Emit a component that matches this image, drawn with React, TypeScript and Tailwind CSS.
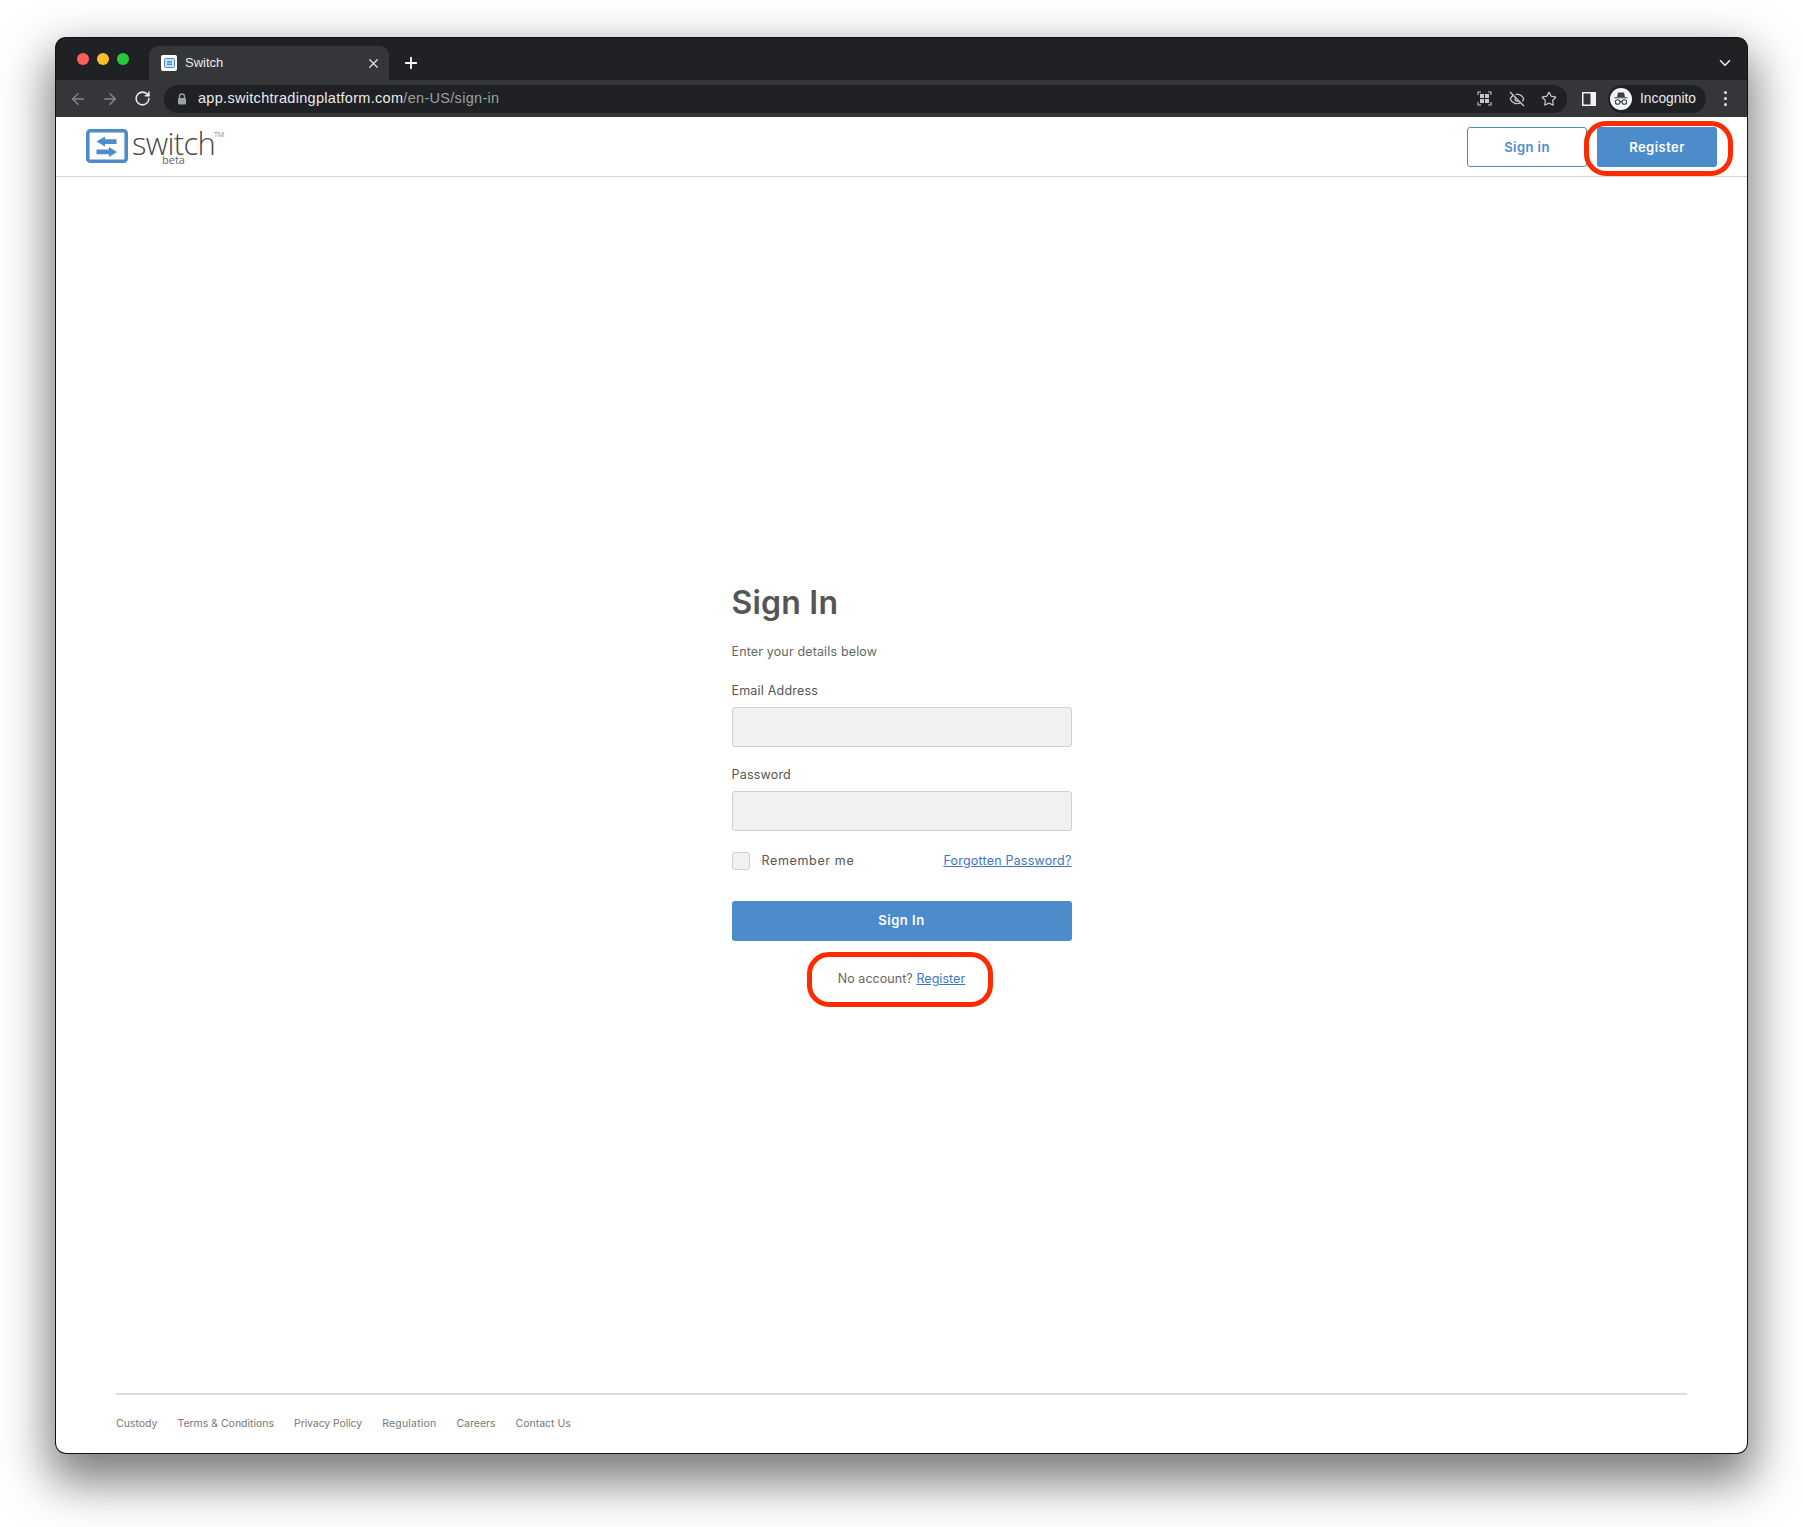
import React from "react";
import { ArrowLeft, ArrowRight, RotateCw, Star, EyeOff, X, Plus, ChevronDown } from "lucide-react";

const body = "[font-family:Inter,'Liberation_Sans',sans-serif]";
const chrome = "[font-family:'Liberation_Sans',Arial,sans-serif]";

function Logo() {
  return (
    <div className="relative ml-[30px] flex h-[59px] w-[140px] items-start self-start pt-[12px]">
      <svg width="42" height="34" viewBox="0 0 42 34" className="shrink-0">
        <rect x="1.8" y="1.8" width="38.4" height="30.4" rx="2.5" fill="#fff" stroke="#4d8ccb" strokeWidth="3.6" />
        <path d="M10.5 12.5 L19 7.5 V10.2 H30.5 V15 H19 V17.5 Z" fill="#4d8ccb" />
        <path d="M31 23 L23 28 V25.2 H10.5 V20.6 H23 V18 Z" fill="#4d8ccb" />
      </svg>
      <span className="ml-[4px] mt-[2px] text-[31px] leading-[24px] font-light tracking-[-0.7px] text-[#4a4a4a] [font-family:'Open_Sans',sans-serif]">switch</span>
      <span className="absolute left-[76px] top-[38px] text-[11px] leading-[9px] text-[#666] [font-family:'Open_Sans',sans-serif]">beta</span>
      <span className="absolute left-[128px] top-[14px] text-[7px] leading-[8px] text-[#888] [font-family:'Open_Sans',sans-serif]">TM</span>
    </div>
  );
}

function Field({ label }: { label: string }) {
  return (
    <>
      <div className="h-[20px] pt-[1px] text-[12.5px] leading-[20px] tracking-[0.2px] text-[#555]">{label}</div>
      <div className="mt-[7px] h-[40px] rounded-[3px] border border-[#cfcfcf] bg-[#f1f1f1]" />
    </>
  );
}

export default function App() {
  return (
    <div className="h-[1527px] w-[1803px] overflow-hidden bg-white pl-[55px] pt-[37px]">
      <div className="flex h-[1417px] w-[1693px] flex-col rounded-[11px] shadow-[0_22px_48px_6px_rgba(0,0,0,0.52)]">
        <div className="flex h-[43px] shrink-0 items-end rounded-t-[11px] border-x border-t border-[#111] bg-[#202124]">
          <div className="flex h-[43px] items-center gap-[8px] pl-[21px] pt-[1px]">
            <span className="h-[12px] w-[12px] rounded-full bg-[#ff5f57]" />
            <span className="h-[12px] w-[12px] rounded-full bg-[#febc2e]" />
            <span className="h-[12px] w-[12px] rounded-full bg-[#28c840]" />
          </div>
          <div className={`ml-[20px] flex h-[34px] w-[240px] items-center rounded-t-[9px] bg-[#35363a] pl-[12px] pr-[8px] ${chrome}`}>
            <span className="flex h-[16px] w-[16px] items-center justify-center rounded-[2px] bg-white">
              <svg width="11" height="10" viewBox="0 0 11 10">
                <rect x="0.5" y="0.5" width="10" height="9" rx="1" fill="#cfe0f2" stroke="#4d8ccb" />
                <rect x="3" y="3" width="5" height="1.5" fill="#4d8ccb" />
                <rect x="3" y="5.5" width="5" height="1.5" fill="#4d8ccb" />
              </svg>
            </span>
            <span className="ml-[8px] flex-1 text-[13px] text-[#e8eaed]">Switch</span>
            <X size={15} strokeWidth={2} className="text-[#dfe1e5]" />
          </div>
          <Plus size={18} strokeWidth={2.4} className="mb-[8px] ml-[13px] text-white" />
          <div className="flex-1" />
          <ChevronDown size={18} strokeWidth={2.2} className="mb-[8px] mr-[13px] text-[#e8eaed]" />
        </div>

        <div className={`flex h-[37px] shrink-0 items-center border-x border-[#111] bg-[#35363a] ${chrome}`}>
          <ArrowLeft size={18} strokeWidth={2} className="ml-[13px] text-[#85878b]" />
          <ArrowRight size={18} strokeWidth={2} className="ml-[14px] text-[#85878b]" />
          <RotateCw size={17} strokeWidth={2.2} className="ml-[15px] text-[#e8eaed]" />
          <div className="ml-[13px] flex h-[28px] w-[1403px] items-center rounded-full bg-[#202124] pl-[13px] pr-[10px]">
            <svg width="10" height="12" viewBox="0 0 10 12" className="shrink-0">
              <path d="M2.5 5V3.5a2.5 2.5 0 0 1 5 0V5" fill="none" stroke="#9aa0a6" strokeWidth="1.3" />
              <rect x="1" y="5" width="8" height="6.5" rx="1" fill="#9aa0a6" />
            </svg>
            <span className="ml-[11px] flex-1 text-[14.5px] tracking-[0.3px] text-[#e8eaed]">
              app.switchtradingplatform.com<span className="text-[#9aa0a6]">/en-US/sign-in</span>
            </span>
            <svg width="15" height="15" viewBox="0 0 15 15" className="shrink-0">
              <path d="M1 4V1h3M11 1h3v3M14 11v3h-3M4 14H1v-3" fill="none" stroke="#c4c7c5" strokeWidth="1.1" />
              <rect x="3" y="3" width="4" height="4" fill="#c4c7c5" />
              <rect x="8" y="3" width="4" height="4" fill="#c4c7c5" />
              <rect x="3" y="8" width="4" height="4" fill="#c4c7c5" />
              <rect x="8" y="8" width="4" height="4" fill="#c4c7c5" />
            </svg>
            <EyeOff size={16} strokeWidth={2} className="ml-[17px] text-[#c4c7c5]" />
            <Star size={16} strokeWidth={1.8} className="ml-[16px] text-[#c4c7c5]" />
          </div>
          <svg width="14" height="14" viewBox="0 0 14 14" className="ml-[15px] shrink-0">
            <rect width="14" height="14" fill="#f1f3f4" />
            <rect x="1.5" y="1.5" width="7" height="11" fill="#35363a" />
          </svg>
          <div className="ml-[12px] flex h-[28px] w-[98px] items-center rounded-full bg-[#202124] pl-[2px]">
            <svg width="22" height="22" viewBox="0 0 22 22" className="shrink-0">
              <circle cx="11" cy="11" r="11" fill="#f1f3f4" />
              <path d="M7 9 L8 4.5 H14 L15 9 Z M4.5 9.3 H17.5 V10.3 H4.5 Z" fill="#3c4043" />
              <circle cx="7.7" cy="14" r="2.3" fill="none" stroke="#3c4043" strokeWidth="1.1" />
              <circle cx="14.3" cy="14" r="2.3" fill="none" stroke="#3c4043" strokeWidth="1.1" />
              <path d="M10 13.6h2" stroke="#3c4043" strokeWidth="1.1" />
            </svg>
            <span className="ml-[8px] pt-[1px] text-[13.8px] text-[#e8eaed]">Incognito</span>
          </div>
          <div className="ml-[18px] flex flex-col gap-[3px]">
            <span className="h-[3px] w-[3px] rounded-full bg-[#e8eaed]" />
            <span className="h-[3px] w-[3px] rounded-full bg-[#e8eaed]" />
            <span className="h-[3px] w-[3px] rounded-full bg-[#e8eaed]" />
          </div>
        </div>

        <div className={`flex min-h-0 flex-1 flex-col rounded-b-[11px] border-x border-b border-[#111] bg-white ${body}`}>
          <header className="flex h-[60px] shrink-0 items-start border-b border-[#d4d4d4] pt-[10px]">
            <div className="mt-[-10px] self-start"><Logo /></div>
            <div className="flex-1" />
            <button className="h-[40px] w-[120px] rounded-[3px] border border-[#4d8ccb] bg-white pt-[1px] text-[13px] font-semibold tracking-[0.45px] text-[#4d8ccb]">Sign in</button>
            <div className="relative ml-[10px] mr-[30px]">
              <button className="block h-[40px] w-[120px] rounded-[3px] bg-[#4d8ccb] pt-[1px] text-[13px] font-semibold tracking-[0.45px] text-white">Register</button>
              <div className="pointer-events-none absolute left-[-13px] top-[-6px] h-[55px] w-[149px] rounded-[22px] border-[5px] border-[#fe2a00]" />
            </div>
          </header>

          <main className="flex flex-1 flex-col items-center pt-[405px]">
            <div className="w-[340px]">
              <h1 className="h-[40px] pt-[1px] text-[32px] leading-[40px] font-semibold tracking-[0.2px] text-[#555]">Sign In</h1>
              <p className="mt-[20px] h-[20px] text-[12.5px] leading-[20px] tracking-[0.15px] text-[#666]">Enter your details below</p>
              <div className="mt-[18px]"><Field label="Email Address" /></div>
              <div className="mt-[17px]"><Field label="Password" /></div>
              <div className="mt-[20px] flex h-[20px] items-center">
                <span className="h-[18px] w-[18px] rounded-[3px] border border-[#cfcfcf] bg-[#f1f1f1]" />
                <span className="ml-[12px] flex-1 text-[12.5px] tracking-[0.65px] text-[#555]">Remember me</span>
                <a className="text-[12.5px] tracking-[0.2px] text-[#3e74c4] underline">Forgotten Password?</a>
              </div>
              <button className="mt-[30px] block h-[40px] w-full rounded-[3px] bg-[#4d8ccb] text-[13px] font-semibold tracking-[0.5px] text-white">Sign In</button>
              <div className="relative mt-[27px] flex h-[20px] items-center justify-center pt-[2px] text-[12.5px] tracking-[0.05px] text-[#666]">
                <span>No account?&nbsp;<a className="text-[#3e74c4] underline">Register</a></span>
                <div className="pointer-events-none absolute left-[75px] top-[-16px] h-[55px] w-[186px] rounded-[22px] border-[5px] border-[#fe2a00]" />
              </div>
            </div>
          </main>

          <footer className="mx-[60px] flex h-[60px] shrink-0 items-center gap-[20px] border-t-2 border-[#dcdcdc] text-[10.5px] text-[#777]">
            <span>Custody</span>
            <span className="tracking-[-0.01px]">Terms &amp; Conditions</span>
            <span className="tracking-[-0.1px]">Privacy Policy</span>
            <span className="tracking-[0.2px]">Regulation</span>
            <span>Careers</span>
            <span>Contact Us</span>
          </footer>
        </div>
      </div>
    </div>
  );
}
